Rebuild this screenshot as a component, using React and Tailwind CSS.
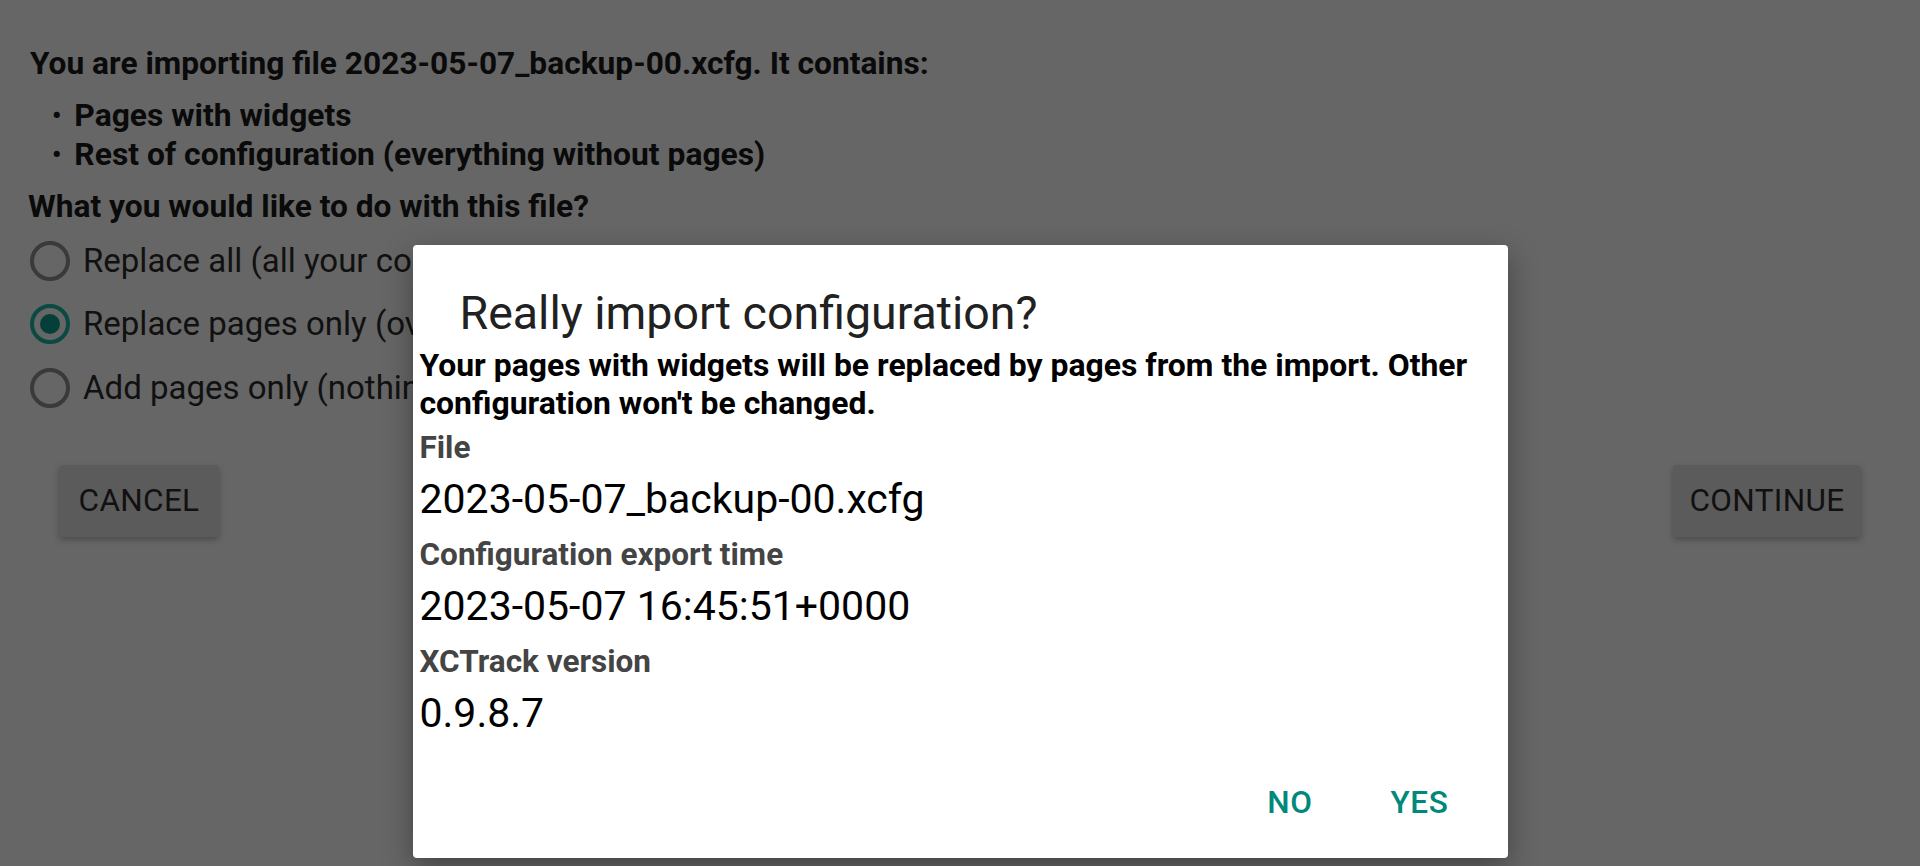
import React, { useState } from "react";

const options = [
  "Replace all (all your configuration will be replaced)",
  "Replace pages only (overwrite your pages with widgets)",
  "Add pages only (nothing will be replaced)",
];

const details = [
  { label: "File", value: "2023-05-07_backup-00.xcfg" },
  { label: "Configuration export time", value: "2023-05-07 16:45:51+0000" },
  { label: "XCTrack version", value: "0.9.8.7" },
];

function Radio({ checked }) {
  return (
    <span
      className={
        checked
          ? "flex h-[40px] w-[40px] shrink-0 items-center justify-center rounded-full border-[4px] border-[#0b4a43]"
          : "flex h-[40px] w-[40px] shrink-0 items-center justify-center rounded-full border-[4px] border-[#3a3a3a]"
      }
    >
      {checked && <span className="h-[20px] w-[20px] rounded-full bg-[#053f39]" />}
    </span>
  );
}

export default function App() {
  const [selected, setSelected] = useState(1);

  return (
    <div className="relative h-[866px] w-full overflow-hidden bg-[#666666] font-['Roboto',sans-serif] text-[#0a0a0a]">
      {/* page under the scrim */}
      <div className="pl-[30px] pr-[59px] pt-[46px]">
        <p className="text-[31.7px] font-bold leading-[36px]">
          You are importing file 2023-05-07_backup-00.xcfg. It contains:
        </p>
        <ul className="mt-[13.5px] pl-[22px] text-[31.8px] font-bold leading-[39px]">
          <li className="flex items-center gap-[13px]">
            <span className="text-[26px]">•</span>
            <span>Pages with widgets</span>
          </li>
          <li className="flex items-center gap-[13px]">
            <span className="text-[26px]">•</span>
            <span>Rest of configuration (everything without pages)</span>
          </li>
        </ul>
        <p className="-ml-[2px] mt-[15.5px] text-[31.7px] font-bold leading-[36px]">
          What you would like to do with this file?
        </p>
        <div className="mt-[4px] flex flex-col">
          {options.map((label, i) => (
            <button
              key={label}
              onClick={() => setSelected(i)}
              className="flex h-[63.5px] items-center gap-[13px] text-left text-[33px] leading-[36px]"
            >
              <Radio checked={selected === i} />
              <span className="whitespace-nowrap text-[#111111]">{label}</span>
            </button>
          ))}
        </div>
        <div className="mt-[45px] flex items-center justify-between pl-[29px]">
          <button className="h-[72px] w-[160px] rounded-[4px] bg-[#5b5b5b] text-[31.5px] font-normal tracking-[0.01em] text-[#111111] shadow-[0_3px_6px_rgba(0,0,0,0.25)]">
            CANCEL
          </button>
          <button className="h-[72px] w-[188px] rounded-[4px] bg-[#5b5b5b] text-[31.5px] font-normal tracking-[0.01em] text-[#111111] shadow-[0_3px_6px_rgba(0,0,0,0.25)]">
            CONTINUE
          </button>
        </div>
      </div>

      {/* dialog */}
      <div className="absolute inset-0 flex justify-center pt-[245px]">
        <div className="h-[613px] w-[1095px] rounded-[4px] bg-white shadow-[0_10px_30px_rgba(0,0,0,0.35)]">
          <h2 className="pl-[47px] pt-[41px] text-[46.5px] leading-[54px] text-[#212121]">
            Really import configuration?
          </h2>
          <p className="mt-[6px] pl-[7px] pr-[7px] text-[31.9px] font-bold leading-[38px] text-black">
            Your pages with widgets will be replaced by pages from the import. Other configuration won't be changed.
          </p>
          <div className="pl-[7px]">
            {details.map((d, i) => (
              <div key={d.label} className={i === 0 ? "mt-[7px]" : "mt-[13px]"}>
                <p className="text-[31.5px] font-bold leading-[38px] text-[#444444]">{d.label}</p>
                <p className="mt-[8px] text-[41px] leading-[48px] text-black">{d.value}</p>
              </div>
            ))}
          </div>
          <div className="mt-[46px] flex justify-end gap-[30px] pr-[35px]">
            <button className="px-[24px] text-[31.5px] font-medium leading-[40px] tracking-[0.02em] text-[#00897b]">
              NO
            </button>
            <button className="px-[24px] text-[31.5px] font-medium leading-[40px] tracking-[0.02em] text-[#00897b]">
              YES
            </button>
          </div>
        </div>
      </div>
    </div>
  );
}
